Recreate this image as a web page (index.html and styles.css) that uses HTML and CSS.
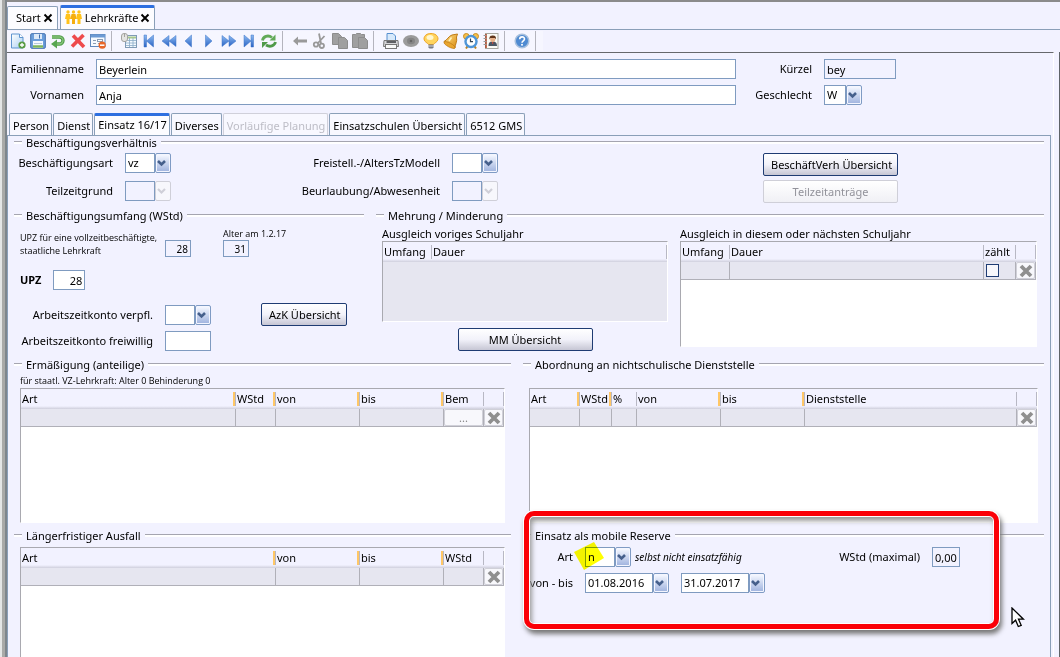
FILE: index.html
```html
<!DOCTYPE html>
<html lang="de">
<head>
<meta charset="utf-8">
<title>Lehrkräfte</title>
<link rel="stylesheet" href="styles.css">
</head>
<body>
<svg class="defs" aria-hidden="true">
  <defs>
    <linearGradient id="blue" x1="0" y1="0" x2="0" y2="1"><stop offset="0" stop-color="#8fbcf2"/><stop offset="1" stop-color="#2a63c4"/></linearGradient>
    <linearGradient id="paper" x1="0" y1="0" x2="1" y2="1"><stop offset="0" stop-color="#fff"/><stop offset="1" stop-color="#a9cff3"/></linearGradient>
    <linearGradient id="gold" x1="0" y1="0" x2="1" y2="1"><stop offset="0" stop-color="#ffe08a"/><stop offset="1" stop-color="#d98a10"/></linearGradient>
    <linearGradient id="face" x1="0" y1="0" x2="0" y2="1"><stop offset="0" stop-color="#f4f7ff"/><stop offset="1" stop-color="#a3b6e0"/></linearGradient>
    <symbol id="arrow" viewBox="0 0 16 20"><rect x="0.5" y="0.5" width="15" height="19" rx="1.5" fill="#f4f6ff" stroke="#7f9bc4"/><rect x="2" y="2" width="12" height="16" fill="url(#face)"/><path d="M3 8l3.500 3.500L10 8" fill="none" stroke="#46608c" stroke-width="2.600"/></symbol>
    <symbol id="arrow-off" viewBox="0 0 16 20"><rect x="0.5" y="0.5" width="15" height="19" rx="1.5" fill="#f7f7fc" stroke="#cfcfd8"/><path d="M3 8l3.500 3.500L10 8" fill="none" stroke="#cfcfd8" stroke-width="2.200"/></symbol>
    <symbol id="cross" viewBox="0 0 16 16"><path d="M3 3l10 10M13 3L3 13" stroke="#8f8f8f" stroke-width="3.800"/></symbol>
    <symbol id="close" viewBox="0 0 10 10"><path d="M1.500 1.500l7 7M8.500 1.500l-7 7" stroke="#000" stroke-width="1.900"/></symbol>
  </defs>
</svg>

<div class="edge"></div>
<div class="app">
  <nav class="app-tabs">
    <div class="app-tab"><button type="button">Start</button><button type="button" aria-label="Start schließen"><svg width="10" height="10"><use href="#close"/></svg></button></div>
    <div class="app-tab active"><button type="button"><svg width="17" height="15" viewBox="0 0 17 15" fill="#ffc21a"><circle cx="3" cy="2" r="1.700"/><path d="M1 4h4l1 5H4.500v5h-3V9H0z"/><circle cx="8.500" cy="2" r="1.700"/><path d="M6.500 4h4l1 5H10v5H7V9H5.500z" fill="#f5ae10"/><circle cx="14" cy="2" r="1.700"/><path d="M12 4h4l1 5h-1.500v5h-3V9H11z"/></svg>Lehrkräfte</button><button type="button" aria-label="Lehrkräfte schließen"><svg width="10" height="10"><use href="#close"/></svg></button></div>
  </nav>

  <div class="toolbar">
    <div class="tools">
      <button type="button" aria-label="Neu"><svg viewBox="0 0 16 16"><path d="M1.500 1h8L13 4.500V15H1.500z" fill="url(#paper)" stroke="#5f94cf"/><path d="M9.500 1v3.500H13" fill="#fff" stroke="#5f94cf"/><circle cx="12" cy="12" r="3.600" fill="#5a9c45"/><path d="M12 10v4M10 12h4" stroke="#fff" stroke-width="1.300"/></svg></button>
      <button type="button" aria-label="Speichern"><svg viewBox="0 0 16 16"><rect x="0.700" y="0.700" width="14.600" height="14.600" rx="1" fill="#6c9edb" stroke="#416fae"/><rect x="4" y="1" width="8" height="5" fill="#dce9f8"/><path d="M9.500 1.500v4" stroke="#416fae"/><rect x="3" y="8" width="10" height="7" fill="#f5f9ff"/><path d="M4 10.500h8" stroke="#b8cadf"/><path d="M3 13.500h10" stroke="#7cb55c" stroke-width="2.500"/></svg></button>
      <button type="button" aria-label="Rückgängig"><svg viewBox="0 0 16 16"><path d="M2 4h7.500a3.500 3.500 0 0 1 0 7H6" fill="none" stroke="#4c9a46" stroke-width="3.400"/><path d="M2 4h7.500a3.500 3.500 0 0 1 0 7H6" fill="none" stroke="#86c57a" stroke-width="1.400"/><path d="M1 11l6-4.500v9z" fill="#58a651"/></svg></button>
      <button type="button" aria-label="Löschen"><svg viewBox="0 0 16 16"><path d="M3 2.500l11 11.500M13.500 2L2 13.500" stroke="#ee4a4c" stroke-width="3.600"/></svg></button>
      <button type="button" aria-label="Maske leeren"><svg viewBox="0 0 16 16"><rect x="0.500" y="1.500" width="14.500" height="12" fill="#f6faff" stroke="#5f88bd"/><path d="M1 3h14" stroke="#6c9ad4" stroke-width="3"/><path d="M3 7.500h3M3 10.500h3M8 10.500h2" stroke="#8a9db5"/><rect x="7.500" y="6.500" width="5" height="2" fill="#fff" stroke="#8a9db5"/><circle cx="12.200" cy="12.200" r="3.600" fill="#e8672a"/><path d="M10 12.200h4.400" stroke="#fff" stroke-width="1.500"/></svg></button>
    </div>
    <div class="tools">
      <button type="button" aria-label="Liste"><svg viewBox="0 0 16 16"><rect x="4.500" y="2.500" width="11" height="12" fill="#f5faff" stroke="#7f9ab5"/><path d="M5 4.500h10" stroke="#a8c88c" stroke-width="2"/><path d="M5 7.500h10M5 10h10M5 12.500h10M8.500 5v9M12 5v9" stroke="#8aacc8" stroke-width="0.800"/><rect x="0.500" y="0.500" width="6" height="8" rx="2.500" fill="#e4e4e2" stroke="#a3a3a0"/><path d="M3.500 1v3" stroke="#a3a3a0"/></svg></button>
      <button type="button" aria-label="Erster"><svg viewBox="0 0 16 16" fill="url(#blue)" stroke="#3d74c8" stroke-width="0.500"><path d="M3 2h2.500v12H3zM12.500 2v12L5.500 8z"/></svg></button>
      <button type="button" aria-label="Zurückblättern"><svg viewBox="0 0 16 16" fill="url(#blue)" stroke="#3d74c8" stroke-width="0.500"><path d="M8 2.500v11L1 8zM15 2.500v11L8 8z"/></svg></button>
      <button type="button" aria-label="Voriger"><svg viewBox="0 0 16 16" fill="url(#blue)" stroke="#3d74c8" stroke-width="0.500"><path d="M10.500 2v12L4 8z"/></svg></button>
      <button type="button" aria-label="Nächster"><svg viewBox="0 0 16 16" fill="url(#blue)" stroke="#3d74c8" stroke-width="0.500"><path d="M4.500 2v12l6.500-6z"/></svg></button>
      <button type="button" aria-label="Vorblättern"><svg viewBox="0 0 16 16" fill="url(#blue)" stroke="#3d74c8" stroke-width="0.500"><path d="M1 2.500v11l7-5.500zM8 2.500v11l7-5.500z"/></svg></button>
      <button type="button" aria-label="Letzter"><svg viewBox="0 0 16 16" fill="url(#blue)" stroke="#3d74c8" stroke-width="0.500"><path d="M10 2h2.500v12H10zM3 2v12l7-6z"/></svg></button>
      <button type="button" aria-label="Aktualisieren"><svg viewBox="0 0 16 16"><path d="M1.500 7.500C2 3.500 7 1.500 11 4.500" fill="none" stroke="#62aa58" stroke-width="2.800"/><path d="M14.500 1.500v6H8.500z" fill="#62aa58"/><path d="M14.500 9C13.500 13 9 14.500 5 12" fill="none" stroke="#4f9a49" stroke-width="2.800"/><path d="M1 15V9h6z" fill="#4f9a49"/></svg></button>
    </div>
    <div class="tools">
      <button type="button" aria-label="Zurück" disabled><svg viewBox="0 0 16 16"><path d="M1 8l5-4.500V6.500h9v3H6v3z" fill="#9a9a9a"/></svg></button>
      <button type="button" aria-label="Ausschneiden" disabled><svg viewBox="0 0 16 16" fill="none" stroke="#999" stroke-width="1.800"><path d="M7 0.500l2 10M12.500 3L5.500 10.500"/><circle cx="4" cy="11.500" r="2.200"/><circle cx="9.800" cy="12.800" r="2.200"/></svg></button>
      <button type="button" aria-label="Kopieren" disabled><svg viewBox="0 0 16 16" fill="#a0a0a0" stroke="#8d8d8d"><path d="M0.500 0.500h6l3 3v8h-9z"/><path d="M6.500 4.500h6l3 3v8h-9z"/></svg></button>
      <button type="button" aria-label="Einfügen" disabled><svg viewBox="0 0 16 16" fill="#a0a0a0" stroke="#8d8d8d"><path d="M0.500 1.500h3l1-1h4l1 1h3v13h-12z"/><path d="M6.500 4.500h6l3 3v8h-9z"/></svg></button>
    </div>
    <div class="tools">
      <button type="button" aria-label="Drucken"><svg viewBox="0 0 16 16"><path d="M4 0.500h6L12.500 3v6H4z" fill="#d7e9fb" stroke="#5790cf"/><path d="M1 7.500h14l0.500 6h-15z" fill="#d5d5d8" stroke="#777"/><path d="M3.500 8h9.500v2H3.500z" fill="#5f6064"/><rect x="2.500" y="11.500" width="11" height="4" fill="#fafafa" stroke="#777"/></svg></button>
      <button type="button" aria-label="Vorschau" disabled><svg viewBox="0 0 16 16"><ellipse cx="8" cy="8" rx="8" ry="6" fill="#9b9b9b"/><ellipse cx="8" cy="8" rx="4" ry="3.300" fill="#858585"/><circle cx="8" cy="8" r="1.300" fill="#666"/></svg></button>
      <button type="button" aria-label="Hinweis"><svg viewBox="0 0 16 16"><path d="M8 0.500C4 0.500 1 2.500 1 6c0 3 4 4 4.500 5.500h5C11 10 15 9 15 6c0-3.500-3-5.500-7-5.500z" fill="#ffd45e" stroke="#eda52b"/><ellipse cx="7" cy="4.500" rx="3.500" ry="2.500" fill="#fff6cf"/><path d="M5.500 11.500h5v3l-1 1h-3l-1-1z" fill="#777b85"/><path d="M5.500 13h5" stroke="#d5d5d5"/></svg></button>
      <button type="button" aria-label="Meldungen"><svg viewBox="0 0 16 16"><path d="M14.500 1L9 2C5.500 3 4.500 7 1 8.500c2 3.500 7 6 11 6.500 0-4 2.500-6 1.500-11z" fill="url(#gold)" stroke="#bf7b16"/><ellipse cx="6.500" cy="12" rx="6.200" ry="2" transform="rotate(28 6.500 12)" fill="#e9a52f" stroke="#bf7b16" stroke-width="0.700"/><path d="M8.500 4.500L6 8" stroke="#fff2bb" stroke-width="1.600"/></svg></button>
      <button type="button" aria-label="Wiedervorlage"><svg viewBox="0 0 16 16"><circle cx="3.300" cy="3.300" r="2.800" fill="#f6c04b" stroke="#c98d22"/><circle cx="12.700" cy="3.300" r="2.800" fill="#f6c04b" stroke="#c98d22"/><path d="M3 15.500l2-3M13 15.500l-2-3" stroke="#b98325" stroke-width="2"/><circle cx="8" cy="8.500" r="5.500" fill="#fff" stroke="#4e95d8" stroke-width="2.400"/><path d="M7.500 5.500v3.200H10" fill="none" stroke="#345" stroke-width="1.200"/></svg></button>
      <button type="button" aria-label="Adressbuch"><svg viewBox="0 0 16 16"><rect x="2.500" y="0.500" width="12.500" height="15" fill="#fbfbf6" stroke="#a7a7a0"/><path d="M3 1v14" stroke="#b14b2c" stroke-width="1.600"/><path d="M0.500 2.500h3M0.500 5.500h3M0.500 8.500h3M0.500 11.500h3" stroke="#999" stroke-width="1"/><path d="M5.500 13c0-4 2-4.500 4-4.500s4.500 0.500 4.500 4.500z" fill="#4c5663"/><circle cx="9.700" cy="6.500" r="2.500" fill="#e8b087"/><path d="M6.500 6.500C6 3 8 2.500 9.700 2.500S13.500 3 13 6.500L12 5H7.500z" fill="#61351b"/><path d="M9.700 9v2" stroke="#d64a3b"/></svg></button>
    </div>
    <div class="tools">
      <button type="button" aria-label="Hilfe"><svg viewBox="0 0 16 16"><circle cx="8" cy="8" r="6.800" fill="#4f8bd2" stroke="#a9c1de" stroke-width="1.500"/><path d="M5.700 6.200c0-3 4.800-3 4.800-0.300C10.500 7.800 8 7.800 8 9.800" fill="none" stroke="#fff" stroke-width="1.600"/><circle cx="8" cy="11.800" r="1" fill="#fff"/></svg></button>
    </div>
  </div>

  <main class="frame">
    <div class="page">
      <div class="person">
        <label for="famname">Familienname</label><input id="famname" value="Beyerlein">
        <label for="kuerzel">Kürzel</label><input id="kuerzel" class="locked" value="bey" readonly>
        <label for="vornamen">Vornamen</label><input id="vornamen" value="Anja">
        <label for="geschlecht">Geschlecht</label><span class="combo tiny"><select id="geschlecht"><option>W</option></select><svg><use href="#arrow"/></svg></span>
      </div>

      <nav class="tabs">
        <button type="button">Person</button>
        <button type="button">Dienst</button>
        <button type="button" class="active">Einsatz 16/17</button>
        <button type="button">Diverses</button>
        <button type="button" disabled>Vorläufige Planung</button>
        <button type="button">Einsatzschulen Übersicht</button>
        <button type="button">6512 GMS</button>
      </nav>

      <div class="panel">
        <fieldset class="employment">
          <legend>Beschäftigungsverhältnis</legend>
          <div class="emp-body">
            <div class="emp-fields">
              <label for="art">Beschäftigungsart</label><span class="combo"><select id="art"><option>vz</option></select><svg><use href="#arrow"/></svg></span>
              <label for="frei">Freistell.-/AltersTzModell</label><span class="combo"><select id="frei"><option></option></select><svg><use href="#arrow"/></svg></span>
              <label for="tzg">Teilzeitgrund</label><span class="combo"><select id="tzg" disabled><option></option></select><svg><use href="#arrow-off"/></svg></span>
              <label for="beur">Beurlaubung/Abwesenheit</label><span class="combo"><select id="beur" disabled><option></option></select><svg><use href="#arrow-off"/></svg></span>
            </div>
            <div class="emp-buttons">
              <button type="button" class="btn wide">BeschäftVerh Übersicht</button>
              <button type="button" class="btn wide" disabled>Teilzeitanträge</button>
            </div>
          </div>
        </fieldset>

        <div class="row scope-row">
          <fieldset>
            <legend>Beschäftigungsumfang (WStd)</legend>
            <div class="scope">
              <div class="scope-top">
                <label class="small two-line" for="upzvz">UPZ für eine vollzeitbeschäftigte,<br>staatliche Lehrkraft</label>
                <input id="upzvz" class="locked short" value="28" readonly>
                <div class="age"><label class="small" for="alter">Alter am 1.2.17</label><input id="alter" class="locked short" value="31" readonly></div>
              </div>
              <div class="upz"><label for="upz">UPZ</label><input id="upz" value="28"></div>
              <div class="azk">
                <label for="azkv">Arbeitszeitkonto verpfl.</label><span class="combo"><select id="azkv"><option></option></select><svg><use href="#arrow"/></svg></span>
                <button type="button" class="btn">AzK Übersicht</button>
                <label for="azkf">Arbeitszeitkonto freiwillig</label><input id="azkf">
              </div>
            </div>
          </fieldset>
          <fieldset>
            <legend>Mehrung / Minderung</legend>
            <div class="change">
              <div class="change-col">
                <div class="caption">Ausgleich voriges Schuljahr</div>
                <div class="sheet off">
                  <table>
                    <colgroup><col class="w49"><col></colgroup>
                    <thead><tr><th>Umfang</th><th>Dauer</th></tr></thead>
                  </table>
                </div>
                <button type="button" class="btn wide">MM Übersicht</button>
              </div>
              <div class="change-col">
                <div class="caption">Ausgleich in diesem oder nächsten Schuljahr</div>
                <div class="sheet mid">
                  <table>
                    <colgroup><col class="w49"><col><col class="w32"><col class="w20"></colgroup>
                    <thead><tr><th>Umfang</th><th>Dauer</th><th>zählt</th><th></th></tr></thead>
                    <tbody><tr><td></td><td></td><td><input type="checkbox" aria-label="zählt"></td><td><button type="button" class="del" aria-label="Zeile löschen"><svg width="16" height="16"><use href="#cross"/></svg></button></td></tr></tbody>
                  </table>
                </div>
              </div>
            </div>
          </fieldset>
        </div>

        <div class="row list-row">
          <fieldset>
            <legend>Ermäßigung (anteilige)</legend>
            <div class="note small">für staatl. VZ-Lehrkraft: Alter 0 Behinderung 0</div>
            <div class="sheet tall">
              <table>
                <colgroup><col><col class="w40"><col class="w84"><col class="w84"><col class="w40"><col class="w20"></colgroup>
                <thead><tr><th class="key">Art</th><th class="key">WStd</th><th class="key">von</th><th class="key">bis</th><th>Bem</th><th></th></tr></thead>
                <tbody><tr><td></td><td></td><td></td><td></td><td><button type="button" class="more">...</button></td><td><button type="button" class="del" aria-label="Zeile löschen"><svg width="16" height="16"><use href="#cross"/></svg></button></td></tr></tbody>
              </table>
            </div>
          </fieldset>
          <fieldset>
            <legend>Abordnung an nichtschulische Dienststelle</legend>
            <div class="note"></div>
            <div class="sheet tall">
              <table>
                <colgroup><col class="w50"><col class="w32"><col class="w25"><col class="w84"><col class="w84"><col><col class="w20"></colgroup>
                <thead><tr><th class="key">Art</th><th class="key">WStd</th><th>%</th><th class="key">von</th><th class="key">bis</th><th>Dienststelle</th><th></th></tr></thead>
                <tbody><tr><td></td><td></td><td></td><td></td><td></td><td></td><td><button type="button" class="del" aria-label="Zeile löschen"><svg width="16" height="16"><use href="#cross"/></svg></button></td></tr></tbody>
              </table>
            </div>
          </fieldset>
        </div>

        <div class="row list-row last">
          <fieldset>
            <legend>Längerfristiger Ausfall</legend>
            <div class="sheet fill">
              <table>
                <colgroup><col><col class="w84"><col class="w84"><col class="w40"><col class="w20"></colgroup>
                <thead><tr><th class="key">Art</th><th class="key">von</th><th class="key">bis</th><th>WStd</th><th></th></tr></thead>
                <tbody><tr><td></td><td></td><td></td><td></td><td><button type="button" class="del" aria-label="Zeile löschen"><svg width="16" height="16"><use href="#cross"/></svg></button></td></tr></tbody>
              </table>
            </div>
          </fieldset>
          <fieldset class="reserve">
            <legend>Einsatz als mobile Reserve</legend>
            <div class="reserve-body">
              <div class="reserve-line">
                <label for="rart">Art</label><span class="combo"><select id="rart"><option>n</option></select><svg><use href="#arrow"/></svg></span>
                <em>selbst nicht einsatzfähig</em>
                <label class="max" for="rmax">WStd (maximal)</label><input id="rmax" class="locked" value="0,00" readonly>
              </div>
              <div class="reserve-line">
                <label for="rvon">von - bis</label><span class="combo date"><select id="rvon"><option>01.08.2016</option></select><svg><use href="#arrow"/></svg></span>
                <span class="combo date"><select aria-label="bis"><option>31.07.2017</option></select><svg><use href="#arrow"/></svg></span>
              </div>
            </div>
            <svg class="marker" viewBox="0 0 30 28"><path d="M0 10L20 0 30 16 10 28z" fill="#ff0"/></svg>
            <div class="callout"></div>
            <svg class="pointer" viewBox="0 0 14 21"><path d="M1 1v15.500l3.600-3.300 2.700 6.300 2.900-1.200-2.700-6.100h4.900z" fill="#fff" stroke="#000" stroke-width="1.300"/></svg>
          </fieldset>
        </div>
      </div>
    </div>
  </main>
</div>
</body>
</html>
```
FILE: styles.css
```css
* { box-sizing: border-box; }

body {
  margin: 0;
  height: 100vh;
  display: flex;
  overflow: hidden;
  background: #f2f2ff;
  color: #000;
  font: 11px/14px "Noto Sans", "Open Sans", sans-serif;
}

button, input, select { font: inherit; color: inherit; margin: 0; }
button { padding: 0; border: 0; background: none; white-space: nowrap; }
label { text-align: right; white-space: nowrap; }
.defs { position: absolute; width: 0; height: 0; }

.edge {
  flex: none;
  width: 7px;
  background: linear-gradient(to right, #e4e6e6 2px, #a9aaa8 2px, #a9aaa8 5px, #7e868c 5px);
}

.app {
  flex: 1;
  min-width: 0;
  display: flex;
  flex-direction: column;
  border-top: 2px solid #8b8b8b;
}

/* document tabs */
.app-tabs {
  display: flex;
  align-items: flex-end;
  gap: 2px;
  height: 28px;
  border-bottom: 1px solid #8a9fb8;
}
.app-tab {
  display: flex;
  align-items: center;
  gap: 2px;
  height: 23px;
  padding: 0 4px 0 8px;
  border: 1px solid #8a9fb8;
  border-bottom: 0;
  border-radius: 2px 2px 0 0;
  background: #fcfcff;
}
.app-tab button { display: flex; align-items: center; gap: 3px; }
.app-tab.active { padding-left: 4px; border-top: 3px solid #2d6fe0; height: 24px; padding-bottom: 2px; }

/* toolbar */
.toolbar { display: flex; align-items: center; height: 22px; }
.tools { display: flex; height: 20px; background: #f6f6ff; }
.tools:first-child { padding-left: 1px; }
.tools button { width: 20px; display: grid; place-items: center; }
.tools svg { width: 16px; height: 16px; }
.tools::after {
  content: "";
  width: 11px;
  background: linear-gradient(#b4b4bd, #b4b4bd) 3px 0 / 1px 100% no-repeat;
}

.frame {
  flex: 1;
  min-height: 0;
  display: flex;
  border-right: 1px solid #5f6468;
}
.page {
  flex: 1;
  min-width: 0;
  margin-right: 5px;
  padding-right: 2px;
  display: flex;
  flex-direction: column;
  border-top: 1px solid #66686c;
  border-right: 1px solid #fff;
}

/* fields */
input, .combo select {
  height: 20px;
  min-width: 0;
  padding: 0 2px;
  border: 1px solid #7f9bc0;
  border-radius: 0;
  background: #fff;
  outline: 0;
}
input.locked { background: #f2f2ff; }
.combo { display: flex; width: 46px; height: 20px; }
.combo.tiny { width: 38px; }
.combo.date { width: 84px; }
.combo select { appearance: none; flex: 1; }
.combo select:disabled { background: #f2f2ff; opacity: 1; }
.combo svg { flex: none; width: 16px; height: 20px; pointer-events: none; }

.person {
  display: grid;
  grid-template-columns: 77px 1fr 64px 72px;
  gap: 6px 12px;
  align-items: center;
  padding: 6px 155px 7px 0;
}

/* page tabs */
.tabs { display: flex; align-items: flex-end; gap: 1px; padding-left: 2px; height: 23px; }
.tabs button {
  height: 22px;
  padding: 3px 2px 0 3px;
  border: 1px solid #8a9fb8;
  border-bottom: 0;
  border-radius: 2px 2px 0 0;
  background: #f8f8ff;
}
.tabs button.active { border-top: 3px solid #2d6fe0; padding-top: 0; padding-bottom: 2px; background: #fcfcff; }
.tabs button:disabled { color: #bdbdc6; border-color: #d0d0da; }

.panel {
  flex: 1;
  min-height: 0;
  display: flex;
  flex-direction: column;
  padding: 0 6px;
  border: 1px solid #8a9fb8;
  border-bottom: 0;
}

/* titled groups */
fieldset {
  position: relative;
  margin: 0;
  padding: 0;
  border: 0;
  min-width: 0;
}
legend {
  display: flex;
  align-items: center;
  gap: 4px;
  width: 100%;
  height: 13px;
  padding: 0;
  line-height: 13px;
  white-space: nowrap;
}
legend::before, legend::after {
  content: "";
  height: 2px;
  border-top: 1px solid #a5a5b0;
  background: #fff;
}
legend::before { width: 8px; }
legend::after { flex: 1; }

.row { display: grid; column-gap: 12px; }
.scope-row { grid-template-columns: 350fr 668fr; }
.list-row { grid-template-columns: 497fr 521fr; }

.btn {
  height: 23px;
  padding: 0 7px;
  border: 1px solid #1f3c73;
  border-radius: 2px;
  background: linear-gradient(#fff, #f2f2fa 50%, #c6c6d4);
}
.btn:disabled { border-color: #cfcfd8; color: #92929a; background: linear-gradient(#fff, #f0f0f5); }
.btn.wide { width: 135px; }

.emp-body { display: flex; justify-content: space-between; padding: 4px 146px 6px 0; }
.emp-fields {
  display: grid;
  grid-template-columns: 99px 46px 257px 46px;
  column-gap: 12px;
  row-gap: 8px;
  align-items: center;
  align-content: start;
}
.emp-buttons { display: grid; gap: 4px; align-content: start; }

.small { font-family: "Open Sans", "Noto Sans", sans-serif; font-size: 9px; line-height: 13px; }
.two-line { text-align: left; width: 133px; }

.scope { padding: 4px 0 7px 6px; }
.scope-top { display: flex; gap: 12px; align-items: flex-end; height: 31px; }
.short { width: 26px; height: 17px; text-align: right; }
.scope-top .locked { font-size: 10px; }
.age { display: flex; flex-direction: column; margin-left: 20px; width: 70px; }
.age label { text-align: left; }
.upz { display: flex; align-items: center; gap: 12px; padding: 13px 0; }
.upz label { font-weight: bold; }
.upz input { width: 32px; text-align: right; }
.azk {
  display: grid;
  grid-template-columns: 133px 46px auto;
  justify-content: start;
  gap: 5px 12px;
  align-items: center;
}
.azk .btn { margin-left: 38px; width: 86px; }

.change { display: grid; grid-template-columns: 286fr 357fr; column-gap: 12px; padding: 5px 7px 0 6px; }
.change-col { display: flex; flex-direction: column; }
.change-col .btn { align-self: center; margin-top: 6px; }

/* data sheets */
.sheet { background: #fff; border: 1px solid #a9a9b0; border-right-color: #fff; border-bottom-color: #fff; }
.sheet.off { height: 81px; background: #e6e6f0; }
.sheet.mid { height: 106px; }
.sheet.tall { height: 135px; margin: 0 6px; }
table { width: 100%; table-layout: fixed; border-collapse: separate; border-spacing: 0; background: #f2f2ff; }
th {
  height: 20px;
  padding: 0 0 1px 1px;
  text-align: left;
  font-weight: normal;
  white-space: nowrap;
  background:
    linear-gradient(#b8b8c4, #b8b8c4) right 0 top 3px / 1px 14px no-repeat,
    linear-gradient(#f2f2ff 17px, #cfcfdc);
}
th.key {
  background:
    linear-gradient(to right, #ffc766 2px, #b8b8c4 2px) right 0 top 3px / 3px 14px no-repeat,
    linear-gradient(#f2f2ff 17px, #cfcfdc);
}
td {
  height: 18px;
  padding: 0;
  line-height: 0;
  background: #e6e6f0;
  border-right: 1px solid #b0b0b8;
  border-bottom: 1px solid #b0b0b8;
}
td input[type="checkbox"] {
  appearance: none;
  width: 13px;
  height: 13px;
  margin-left: 2px;
  padding: 0;
  border: 1px solid #1f3c73;
  background: #f7f7fb;
}
.del, .more {
  width: 100%;
  height: 17px;
  border: 1px solid #d0d0d8;
  border-radius: 2px;
  background: #f8f8fc;
  display: grid;
  place-items: center;
  line-height: 12px;
  color: #888;
}
.w20 { width: 20px; }
.w25 { width: 25px; }
.w32 { width: 32px; }
.w40 { width: 40px; }
.w49 { width: 49px; }
.w50 { width: 50px; }
.w84 { width: 84px; }

.note { height: 17px; padding: 3px 0 0 6px; white-space: nowrap; }
.list-row { padding-bottom: 6px; }
.list-row.last { flex: 1; min-height: 0; padding-bottom: 0; }
.fill { height: 100%; margin: 5px 6px 0; }

/* mobile reserve */
.reserve-body { padding: 5px 6px 0 0; display: grid; gap: 6px; }
.reserve-line { display: flex; align-items: center; gap: 12px; }
.reserve-line > label:first-child { width: 50px; }
.reserve-line em { font-size: 10px; margin-left: -8px; white-space: nowrap; }
.reserve-line .max { margin-left: auto; }
.reserve-line input { width: 28px; margin-right: 78px; }

.marker { position: absolute; left: 51px; top: 0; width: 30px; height: 28px; mix-blend-mode: multiply; }
.callout {
  position: absolute;
  left: 1px;
  right: 45px;
  top: -31px;
  height: 118px;
  border: 5px solid #fb0007;
  border-radius: 10px;
  box-shadow: 0 0 0 1px #fff, inset 0 0 0 1px #fff, 2px 4px 5px 1px #777, inset 2px 4px 5px 1px #999;
}
.pointer { position: absolute; left: 488px; top: 65px; width: 14px; height: 21px; }
```
